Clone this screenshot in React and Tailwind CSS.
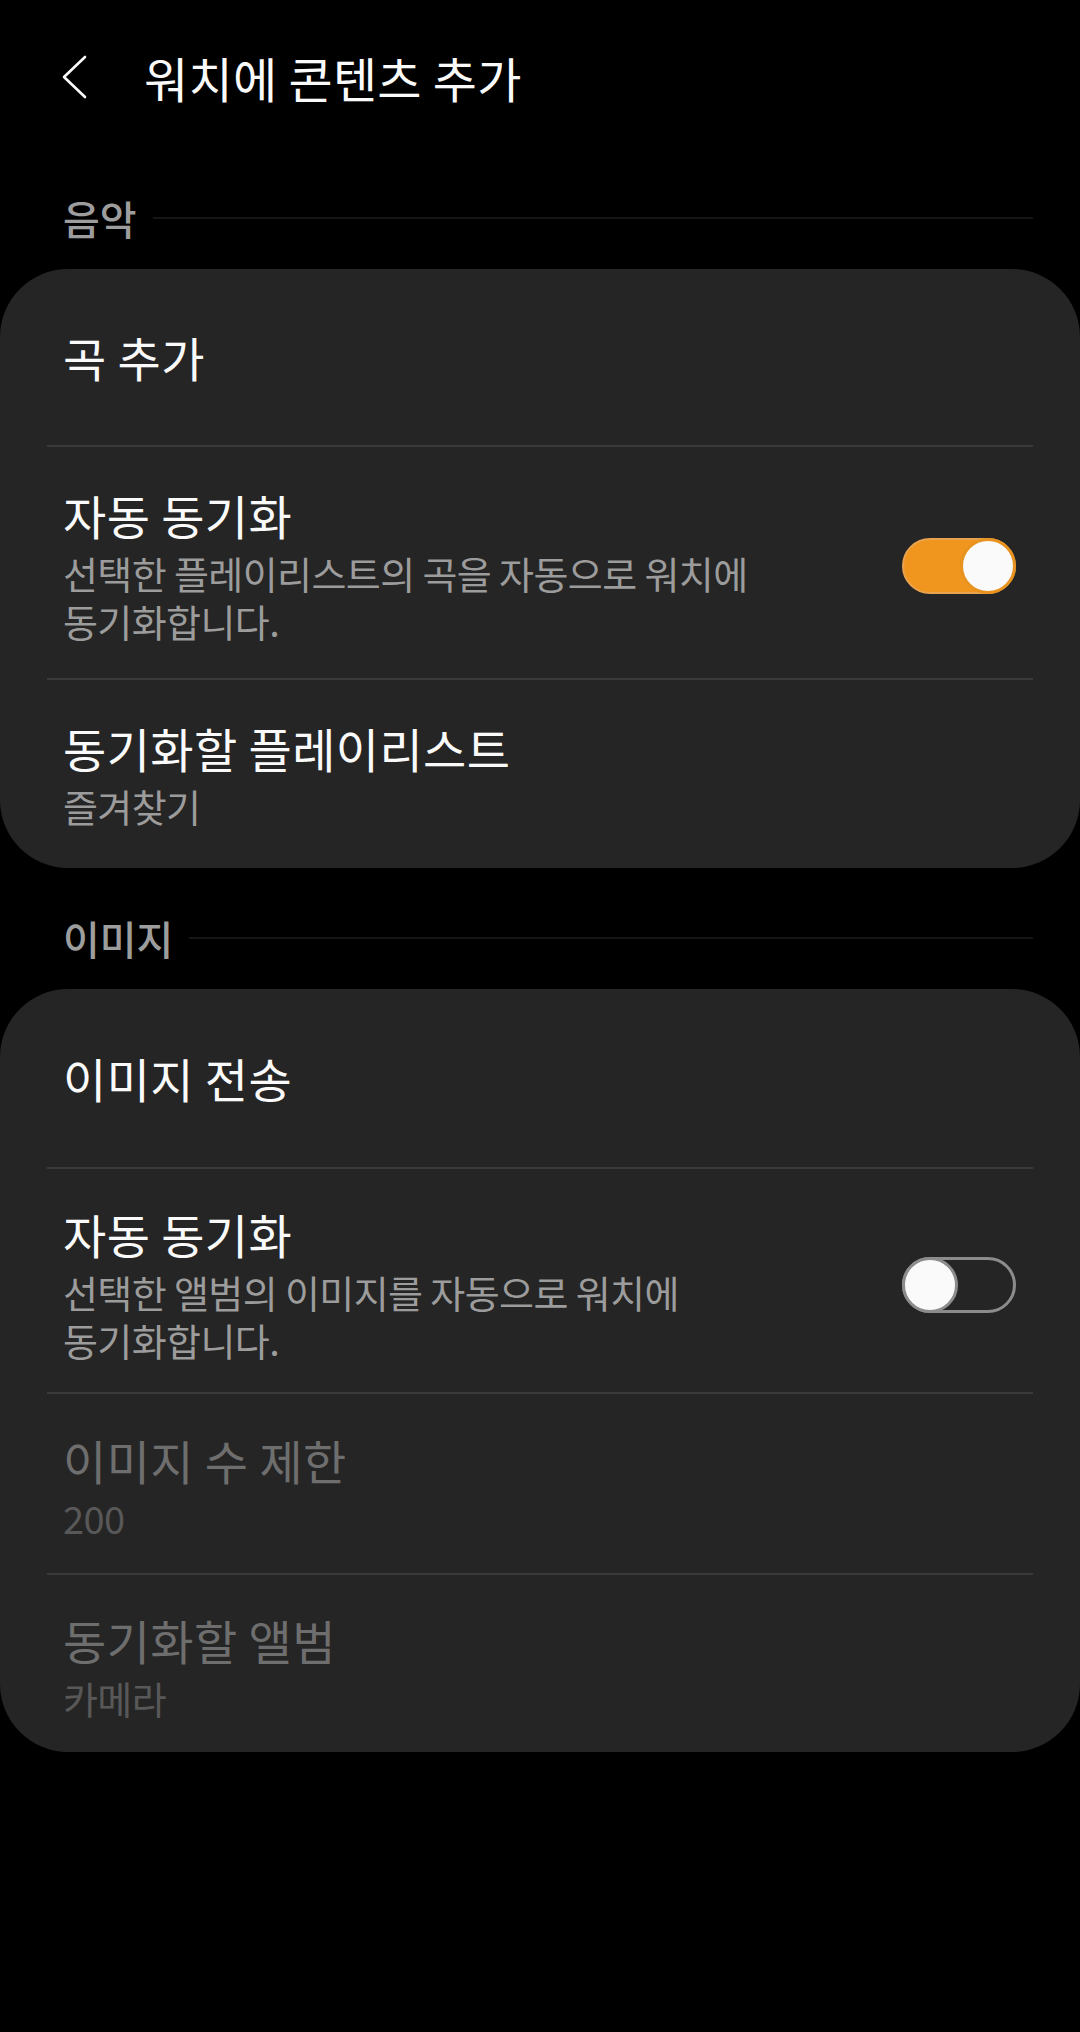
import React from 'react';

const font = { fontFamily: '"Noto Sans CJK KR", "Noto Sans", sans-serif' };

const Toggle = ({ on }) => {
  if (on) {
    return (
      <div className="flex items-center justify-end w-[114px] h-[56px] rounded-full bg-[#f0961f] border-[2px] border-[#e9a34e] shrink-0">
        <div className="w-[56px] h-[56px] -mr-[2px] rounded-full bg-[#fafafa] border-[3px] border-[#e8921f] shrink-0" />
      </div>
    );
  }
  return (
    <div className="flex items-center justify-start w-[114px] h-[56px] rounded-full border-[3px] border-[#8c8c8c] shrink-0">
      <div className="w-[56px] h-[56px] -ml-[3px] rounded-full bg-[#fafafa] border-[3px] border-[#8c8c8c] shrink-0" />
    </div>
  );
};

const Divider = () => <div className="mx-[47px] h-[2px] bg-[#3a3a3a]" />;

const SectionHeader = ({ label, className }) => (
  <div className={`flex items-center h-[74px] px-[63px] ${className}`}>
    <span className="text-[40px] leading-[74px] font-medium tracking-[0px] text-[#9d9d9d]">{label}</span>
    <div className="flex-1 ml-[16px] mr-[-16px] h-[2px] bg-[#151515]" />
  </div>
);

const Row = ({ title, sub, toggle, disabled, pad }) => (
  <div className={`flex items-center pl-[63px] pr-[64px] ${pad}`}>
    <div className="flex-1 min-w-0 break-keep">
      <div className={`text-[47px] leading-[56px] tracking-[0.4px] ${disabled ? 'text-[#6e6e6e]' : 'text-[#fafafa]'}`}>
        {title}
      </div>
      {sub && (
        <div className={`mt-[6px] text-[38px] leading-[48px] tracking-[-0.6px] ${disabled ? 'text-[#585858]' : 'text-[#9c9c9c]'}`}>
          {sub}
        </div>
      )}
    </div>
    {toggle !== undefined && (
      <div className="ml-[100px]">
        <Toggle on={toggle} />
      </div>
    )}
  </div>
);

const App = () => {
  return (
    <div className="w-[1080px] h-[2032px] bg-black" style={font}>
      <div className="flex items-center h-[154px] pl-[60px]">
        <svg width="30" height="44" viewBox="0 0 30 44" className="shrink-0">
          <polyline points="25,2 4,22 25,42" fill="none" stroke="#fafafa" strokeWidth="2.6" strokeLinecap="round" strokeLinejoin="round" />
        </svg>
        <h1 className="ml-[54px] text-[48px] leading-[56px] tracking-[0.3px] text-[#fafafa] font-normal">워치에 콘텐츠 추가</h1>
      </div>

      <SectionHeader label="음악" className="mt-[27px] mb-[14px]" />

      <div className="bg-[#252525] rounded-[68px]">
        <div className="flex items-center h-[176px] pl-[63px]">
          <span className="text-[47px] leading-[56px] tracking-[0.4px] text-[#fafafa]">곡 추가</span>
        </div>
        <Divider />
        <Row
          title="자동 동기화"
          sub="선택한 플레이리스트의 곡을 자동으로 워치에 동기화합니다."
          toggle={true}
          pad="pt-[40px] pb-[33px]"
        />
        <Divider />
        <Row title="동기화할 플레이리스트" sub="즐겨찾기" pad="pt-[40px] pb-[38px]" />
      </div>

      <SectionHeader label="이미지" className="mt-[33px] mb-[14px]" />

      <div className="bg-[#252525] rounded-[68px]">
        <div className="flex items-center h-[178px] pl-[63px]">
          <span className="text-[47px] leading-[56px] tracking-[0.4px] text-[#fafafa]">이미지 전송</span>
        </div>
        <Divider />
        <Row
          title="자동 동기화"
          sub="선택한 앨범의 이미지를 자동으로 워치에 동기화합니다."
          toggle={false}
          pad="pt-[37px] pb-[28px]"
        />
        <Divider />
        <Row title="이미지 수 제한" sub="200" disabled pad="pt-[38px] pb-[31px]" />
        <Divider />
        <Row title="동기화할 앨범" sub="카메라" disabled pad="pt-[37px] pb-[30px]" />
      </div>
    </div>
  );
};

export default App;
